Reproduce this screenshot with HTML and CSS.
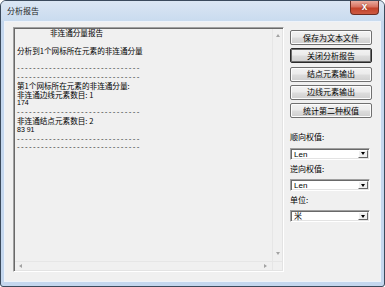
FILE: index.html
```html
<!DOCTYPE html>
<html lang="zh-CN">
<head>
    <meta charset="UTF-8">
    <meta name="viewport" content="width=device-width, initial-scale=1.0">
    <title>分析报告</title>
    <link rel="stylesheet" href="styles.css">
</head>
<body>

    <div class="window">
        <div class="titlebar">
            <span class="title">分析报告</span>
            <div class="close-btn">x</div>
        </div>
        <div class="frame">
            <div class="client">

                <div class="report">
                    <div class="report-text">
                        <div class="line heading">非连通分量报告</div>
                        <div class="line">&nbsp;</div>
                        <div class="line">分析到1个网标所在元素的非连通分量</div>
                        <div class="line">&nbsp;</div>
                        <div class="line rule">-------------------------------</div>
                        <div class="line rule">-------------------------------</div>
                        <div class="line">第1个网标所在元素的非连通分量:</div>
                        <div class="line">非连通边线元素数目: 1</div>
                        <div class="line num">174</div>
                        <div class="line rule">-------------------------------</div>
                        <div class="line">非连通结点元素数目: 2</div>
                        <div class="line num">83 91</div>
                        <div class="line rule">-------------------------------</div>
                        <div class="line rule">-------------------------------</div>
                    </div>
                    <div class="vscroll">
                        <span class="arrow up"></span>
                        <span class="arrow down"></span>
                    </div>
                    <div class="hscroll">
                        <span class="arrow left"></span>
                        <span class="arrow right"></span>
                    </div>
                    <div class="corner"></div>
                </div>

                <div class="side">
                    <button class="btn">保存为文本文件</button>
                    <button class="btn btn-default">关闭分析报告</button>
                    <button class="btn">结点元素输出</button>
                    <button class="btn">边线元素输出</button>
                    <button class="btn">统计第二种权值</button>

                    <div class="options">
                        <label class="field-label">顺向权值:</label>
                        <div class="combo"><span class="combo-text">Len</span><span class="combo-btn"></span></div>

                        <label class="field-label">逆向权值:</label>
                        <div class="combo"><span class="combo-text">Len</span><span class="combo-btn"></span></div>

                        <label class="field-label">单位:</label>
                        <div class="combo"><span class="combo-text">米</span><span class="combo-btn"></span></div>
                    </div>
                </div>

            </div>
        </div>
    </div>

</body>
</html>
```

FILE: styles.css
```css
* {
    box-sizing: border-box;
}

body {
    margin: 0;
    padding: 0;
    background-color: #fff;
    font-family: "Liberation Sans", "Noto Sans CJK SC", sans-serif;
    font-size: 8px;
    color: #000;
}

.window {
    width: 385px;
    height: 287px;
    border: 1px solid #3b4a5c;
    border-radius: 6px 6px 3px 3px;
    background-color: #c4d7ee;
    display: flex;
    flex-direction: column;
    overflow: hidden;
}

/* title bar */
.titlebar {
    height: 20px;
    display: flex;
    align-items: flex-start;
    padding: 0 5px 0 6px;
    background: linear-gradient(#dbe6f3, #c9dbef);
}

.title {
    line-height: 19px;
    font-family: "Noto Sans CJK SC", sans-serif;
    font-size: 8px;
    color: #1e1e1e;
}

.close-btn {
    margin-left: auto;
    width: 29px;
    height: 14px;
    border: 1px solid #6e2d22;
    border-top: none;
    border-radius: 0 0 4px 4px;
    background: linear-gradient(#e9ac9e, #d87260 45%, #c4432a 55%, #cd5a42);
    color: #fff;
    font-weight: bold;
    font-size: 10px;
    line-height: 12px;
    text-align: center;
    text-shadow: 0 0 2px #6e2d22;
}

.frame {
    flex: 1;
    padding: 0 3px 4px 3px;
}

.client {
    height: 100%;
    border: 1px solid #eef3fa;
    background-color: #f0f0f0;
    display: flex;
    align-items: flex-start;
    padding: 5px 0 0 8px;
}

/* report box */
.report {
    width: 271px;
    height: 245px;
    display: grid;
    grid-template-columns: 1fr 10px;
    grid-template-rows: 1fr 9px;
    border-top: 1px solid #a0a0a0;
    border-left: 1px solid #a0a0a0;
    border-right: 1px solid #fff;
    border-bottom: 1px solid #fff;
    box-shadow: inset 1px 1px #696969, inset -1px -1px #e3e3e3;
    padding: 1px;
}

.report-text {
    padding: 0 0 0 2px;
    font-family: "Noto Sans CJK SC", sans-serif;
    font-size: 7.6px;
}

.line {
    height: 8.8px;
    line-height: 8.8px;
    white-space: nowrap;
}

.heading {
    padding-left: 33px;
}

.rule {
    font-family: "Liberation Sans", sans-serif;
    font-size: 8px;
    letter-spacing: 1.33px;
    color: #333;
}

.num {
    font-family: "Liberation Sans", sans-serif;
    font-size: 7px;
}

.vscroll {
    display: flex;
    flex-direction: column;
    justify-content: space-between;
    align-items: center;
    padding: 5px 0 6px 0;
    border-left: 1px solid #e6e6e6;
}

.hscroll {
    display: flex;
    justify-content: space-between;
    align-items: center;
    padding: 0 5px 0 4px;
    border-top: 1px solid #e6e6e6;
}

.corner {
    border-top: 1px solid #e6e6e6;
    border-left: 1px solid #e6e6e6;
}

.arrow {
    width: 0;
    height: 0;
    border: 2px solid transparent;
}

.arrow.up {
    border-bottom: 3px solid #a3a3a3;
    border-top-width: 0;
}

.arrow.down {
    border-top: 3px solid #a3a3a3;
    border-bottom-width: 0;
}

.arrow.left {
    border-right: 3px solid #a3a3a3;
    border-left-width: 0;
}

.arrow.right {
    border-left: 3px solid #a3a3a3;
    border-right-width: 0;
}

/* right column */
.side {
    width: 82px;
    margin-left: 6px;
    padding-top: 3px;
    display: flex;
    flex-direction: column;
}

.btn {
    height: 15px;
    margin: 0 0 3.25px 0;
    padding: 0;
    border: 1px solid #707070;
    border-radius: 2px;
    background: linear-gradient(#f3f3f3, #ebebeb 48%, #dddddd 52%, #cfcfcf);
    box-shadow: inset 0 0 0 1px #fcfcfc;
    font-family: "Noto Sans CJK SC", sans-serif;
    font-size: 8px;
    line-height: 12px;
    color: #000;
}

.btn-default {
    border-color: #2a2a2a;
    box-shadow: inset 0 0 0 1px #6f6f6f;
}

.options {
    margin-top: 11px;
    display: flex;
    flex-direction: column;
    padding-right: 2px;
}

.field-label {
    display: block;
    height: 10px;
    line-height: 10px;
    margin-bottom: 5.5px;
    font-family: "Noto Sans CJK SC", sans-serif;
}

.combo {
    height: 12px;
    margin-bottom: 3.75px;
    display: flex;
    background-color: #fff;
    border-top: 1px solid #a0a0a0;
    border-left: 1px solid #a0a0a0;
    border-right: 1px solid #fff;
    border-bottom: 1px solid #fff;
    box-shadow: inset 1px 1px #696969, inset -1px -1px #e3e3e3;
    padding: 1px;
}

.combo-text {
    flex: 1;
    padding-left: 2px;
    line-height: 10px;
    font-family: "Liberation Sans", "Noto Sans CJK SC", sans-serif;
}

.combo-btn {
    width: 10px;
    background-color: #f0f0f0;
    border-top: 1px solid #fff;
    border-left: 1px solid #fff;
    border-right: 1px solid #696969;
    border-bottom: 1px solid #696969;
    display: flex;
    align-items: center;
    justify-content: center;
}

.combo-btn::after {
    content: "";
    border-left: 2.5px solid transparent;
    border-right: 2.5px solid transparent;
    border-top: 3px solid #000;
}
```
